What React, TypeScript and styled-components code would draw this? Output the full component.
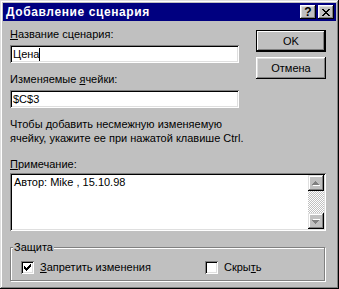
import styled, { createGlobalStyle } from 'styled-components';

const GlobalStyle = createGlobalStyle`
  html, body {
    margin: 0;
    padding: 0;
    background: #c0c0c0;
  }
  body {
    font-family: "Liberation Sans", Arial, sans-serif;
    font-size: 11px;
    color: #000;
  }
`;

const CloseGlyph = () => (
  <svg width="8" height="7" viewBox="0 0 8 7" shapeRendering="crispEdges">
    <path
      fill="#000"
      d="M0 0h2v1H0z M6 0h2v1H6z M1 1h2v1H1z M5 1h2v1H5z M2 2h4v1H2z M3 3h2v1H3z M2 4h4v1H2z M1 5h2v1H1z M5 5h2v1H5z M0 6h2v1H0z M6 6h2v1H6z"
    />
  </svg>
);

const CheckGlyph = () => (
  <svg width="7" height="7" viewBox="0 0 7 7" shapeRendering="crispEdges">
    <path
      fill="#000"
      d="M0 2h1v3H0z M1 3h1v3H1z M2 4h1v3H2z M3 3h1v3H3z M4 2h1v3H4z M5 1h1v3H5z M6 0h1v3H6z"
    />
  </svg>
);

const Arrow = ({ down }: { down?: boolean }) => (
  <svg width="8" height="5" viewBox="0 0 8 5" shapeRendering="crispEdges">
    <g transform={down ? 'translate(0 5) scale(1 -1)' : undefined}>
      <path fill="#fff" d="M4 1h1v1H4z M3 2h3v1H3z M2 3h5v1H2z M1 4h7v1H1z" />
      <path fill="#808080" d="M3 0h1v1H3z M2 1h3v1H2z M1 2h5v1H1z M0 3h7v1H0z" />
    </g>
  </svg>
);

const App = () => {
  return (
    <>
      <GlobalStyle />
      <Window>
        <TitleBar>
          <Title>Добавление сценария</Title>
          <TitleButtons>
            <TitleButton>
              <Question>?</Question>
            </TitleButton>
            <TitleButton>
              <CloseGlyph />
            </TitleButton>
          </TitleButtons>
        </TitleBar>

        <Body>
          <TopRow>
            <Fields>
              <Label>
                <U>Н</U>азвание сценария:
              </Label>
              <Field>
                Цена
                <Caret />
              </Field>
              <Label $gap={10}>
                Изменяемые <U>я</U>чейки:
              </Label>
              <Field>$C$3</Field>
            </Fields>
            <Buttons>
              <Button $default>OK</Button>
              <Button>Отмена</Button>
            </Buttons>
          </TopRow>

          <Hint>
            Чтобы добавить несмежную изменяемую
            <br />
            ячейку, укажите ее при нажатой клавише Ctrl.
          </Hint>

          <Label $gap={13}>
            <U>П</U>римечание:
          </Label>
          <NoteBox>
            <NoteText>Автор: Mike , 15.10.98</NoteText>
            <ScrollBar>
              <ScrollButton>
                <Arrow />
              </ScrollButton>
              <ScrollTrack />
              <ScrollButton>
                <Arrow down />
              </ScrollButton>
            </ScrollBar>
          </NoteBox>

          <GroupBox>
            <Legend>Защита</Legend>
            <CheckRow>
              <CheckItem>
                <CheckBox>
                  <CheckGlyph />
                </CheckBox>
                <span>
                  <U>З</U>апретить изменения
                </span>
              </CheckItem>
              <CheckItem>
                <CheckBox />
                <span>
                  Скры<U>т</U>ь
                </span>
              </CheckItem>
            </CheckRow>
          </GroupBox>
        </Body>
      </Window>
    </>
  );
};

export default App;

const Window = styled.div`
  width: 339px;
  height: 289px;
  box-sizing: border-box;
  padding: 3px;
  background: #c0c0c0;
  box-shadow: inset -1px -1px #000, inset 1px 1px #dfdfdf, inset -2px -2px #808080,
    inset 2px 2px #fff;
  display: flex;
  flex-direction: column;
`;

const TitleBar = styled.div`
  height: 18px;
  background: #000080;
  display: flex;
  align-items: center;
  justify-content: space-between;
  padding: 0 2px 0 3px;
`;

const Title = styled.span`
  color: #fff;
  font-weight: bold;
  font-size: 12px;
  letter-spacing: 0.6px;
`;

const TitleButtons = styled.div`
  display: flex;
  gap: 2px;
`;

const TitleButton = styled.div`
  width: 16px;
  height: 14px;
  box-sizing: border-box;
  background: #c0c0c0;
  box-shadow: inset -1px -1px #000, inset 1px 1px #fff, inset -2px -2px #808080,
    inset 2px 2px #dfdfdf;
  display: flex;
  align-items: center;
  justify-content: center;
`;

const Question = styled.span`
  font-weight: bold;
  font-size: 12px;
  line-height: 12px;
`;

const Body = styled.div`
  padding: 0 10px 0 7px;
  display: flex;
  flex-direction: column;
`;

const TopRow = styled.div`
  display: flex;
  gap: 17px;
`;

const Fields = styled.div`
  width: 229px;
  display: flex;
  flex-direction: column;
`;

const Label = styled.div<{ $gap?: number }>`
  margin-top: ${(p) => p.$gap ?? 7}px;
  height: 13px;
  line-height: 13px;
  white-space: nowrap;
`;

const U = styled.span`
  text-decoration: underline;
`;

const sunken = `
  box-shadow: inset 1px 1px #808080, inset -1px -1px #fff, inset 2px 2px #000,
    inset -2px -2px #dfdfdf;
`;

const Field = styled.div`
  margin-top: 4px;
  height: 18px;
  box-sizing: border-box;
  background: #fff;
  ${sunken}
  padding: 0 3px;
  display: flex;
  align-items: center;
  line-height: 13px;
`;

const Caret = styled.span`
  display: inline-block;
  width: 1px;
  height: 13px;
  background: #000;
`;

const Buttons = styled.div`
  width: 70px;
  padding-top: 9px;
  display: flex;
  flex-direction: column;
  gap: 5px;
`;

const Button = styled.div<{ $default?: boolean }>`
  height: 22px;
  box-sizing: border-box;
  display: flex;
  align-items: center;
  justify-content: center;
  background: #c0c0c0;
  box-shadow: ${(p) =>
    p.$default
      ? 'inset 0 0 0 1px #000, inset -2px -2px #000, inset 2px 2px #fff, inset -3px -3px #808080'
      : 'inset -1px -1px #000, inset 1px 1px #fff, inset -2px -2px #808080, inset 2px 2px #dfdfdf'};
`;

const Hint = styled.div`
  margin-top: 9px;
  line-height: 14px;
  white-space: nowrap;
`;

const NoteBox = styled.div`
  margin-top: 2px;
  height: 58px;
  box-sizing: border-box;
  background: #fff;
  ${sunken}
  padding: 2px;
  display: flex;
`;

const NoteText = styled.div`
  flex: 1;
  padding: 1px 2px;
  line-height: 13px;
`;

const ScrollBar = styled.div`
  width: 16px;
  display: flex;
  flex-direction: column;
`;

const ScrollButton = styled.div`
  height: 16px;
  box-sizing: border-box;
  background: #c0c0c0;
  box-shadow: inset -1px -1px #000, inset 1px 1px #dfdfdf, inset -2px -2px #808080,
    inset 2px 2px #fff;
  display: flex;
  align-items: center;
  justify-content: center;
`;

const ScrollTrack = styled.div`
  flex: 1;
  background-image: conic-gradient(#fff 25%, #c0c0c0 0 50%, #fff 0 75%, #c0c0c0 0);
  background-size: 2px 2px;
`;

const GroupBox = styled.div`
  position: relative;
  margin-top: 16px;
  margin-right: 1px;
  height: 34px;
  box-sizing: border-box;
  border: 1px solid #808080;
  box-shadow: inset 1px 1px #fff, 1px 1px #fff;
  padding: 0 10px;
  display: flex;
  align-items: center;
`;

const Legend = styled.span`
  position: absolute;
  top: -7px;
  left: 2px;
  padding: 0 1px;
  background: #c0c0c0;
  line-height: 13px;
`;

const CheckRow = styled.div`
  width: 100%;
  margin-top: 7px;
  display: grid;
  grid-template-columns: 184px 1fr;
`;

const CheckItem = styled.label`
  display: flex;
  align-items: center;
  gap: 6px;
  line-height: 13px;
`;

const CheckBox = styled.span`
  width: 13px;
  height: 13px;
  box-sizing: border-box;
  background: #fff;
  ${sunken}
  display: flex;
  align-items: center;
  justify-content: center;
`;
